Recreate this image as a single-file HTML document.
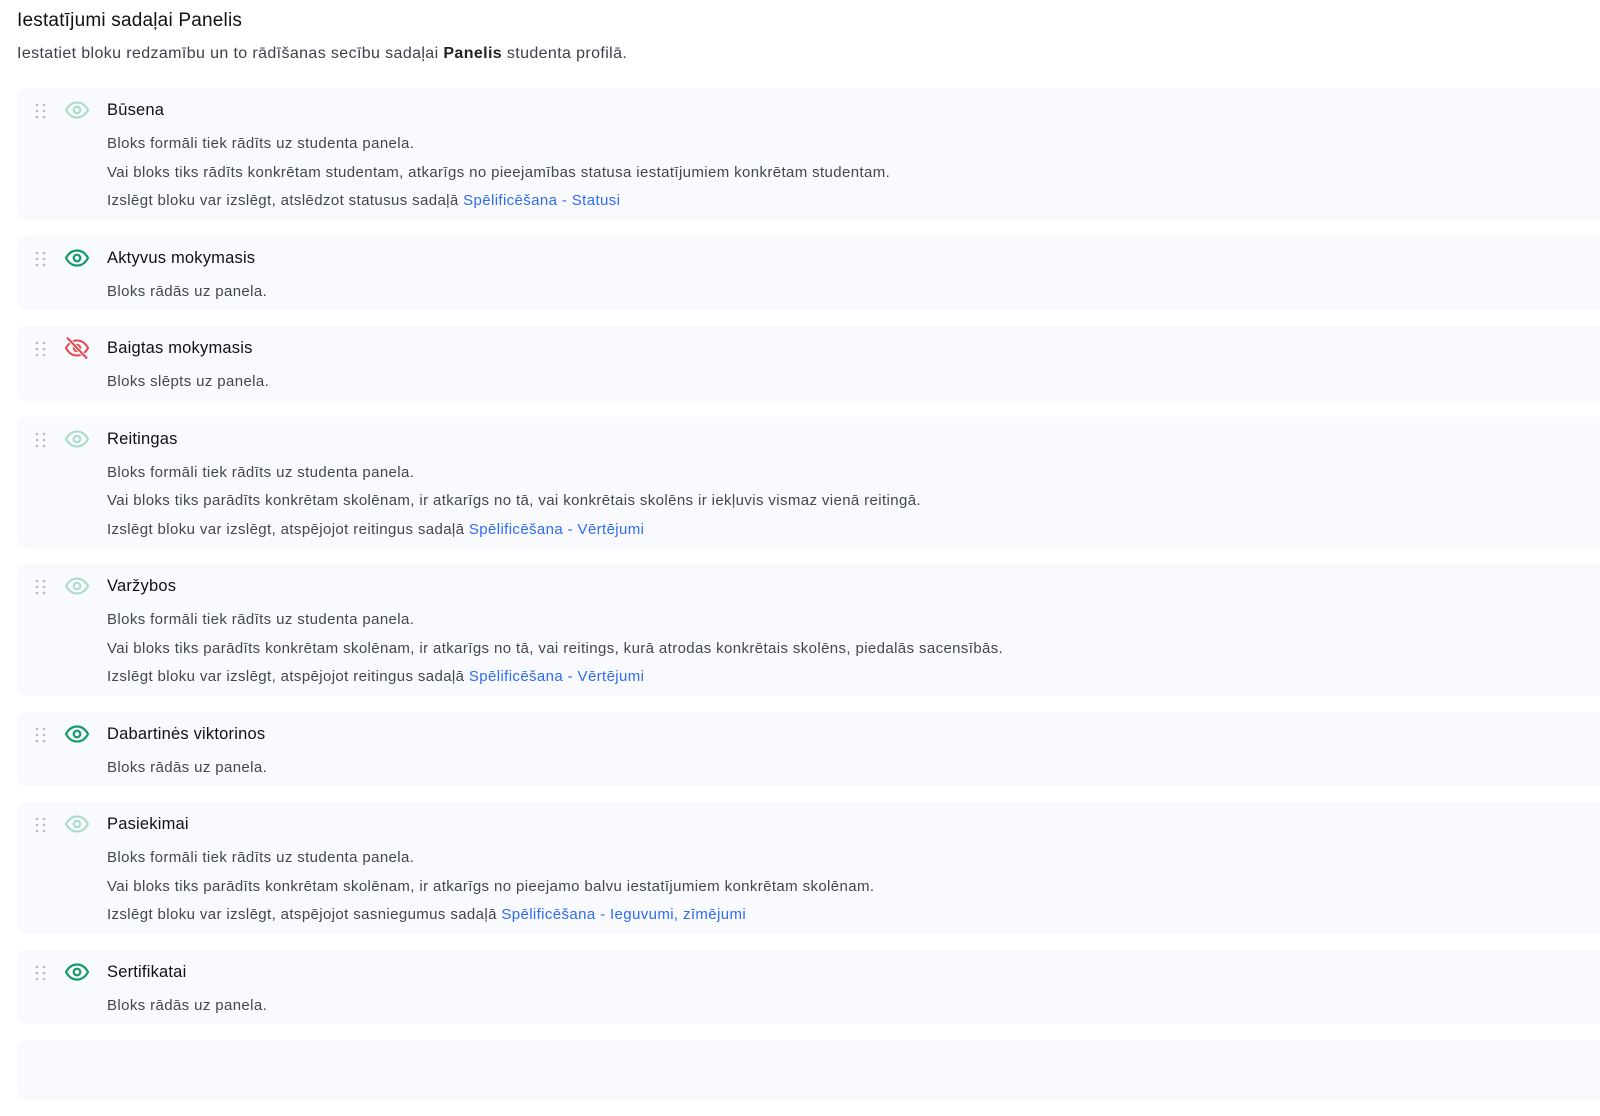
<!DOCTYPE html>
<html><head><meta charset="utf-8"><style>
*{box-sizing:border-box;margin:0;padding:0}
body{width:1600px;height:1052px;overflow:hidden;background:#fff;font-family:"Liberation Sans",sans-serif;color:#1f2328}
h1{position:absolute;left:17px;top:9px;font-size:19px;font-weight:400;line-height:24px;color:#111;letter-spacing:0.2px}
.sub{position:absolute;left:17px;top:43px;font-size:16px;line-height:22px;color:#3c4048;letter-spacing:0.38px}
.sub b{font-weight:700;color:#222}
.list{position:absolute;left:17px;top:88px;width:1600px}
.card{background:#f9fafd;border-radius:8px;padding:8px 0 4px 90px;margin-bottom:16px;position:relative}
.t{font-size:16.5px;line-height:28px;color:#111;letter-spacing:0.2px}
.d{margin-top:6px;font-size:15px;line-height:28.5px;color:#42464e;letter-spacing:0.38px}
.d a{color:#2f6bf2;text-decoration:none}
.h{position:absolute;left:18px;top:15px}
.e{position:absolute;left:47px;top:13px}
</style></head><body>
<h1>Iestatījumi sadaļai Panelis</h1>
<div class="sub">Iestatiet bloku redzamību un to rādīšanas secību sadaļai <b>Panelis</b> studenta profilā.</div>
<svg width="0" height="0" style="position:absolute">
<defs>
<g id="hd" fill="#b7bcc6"><circle cx="2" cy="2" r="1.3"/><circle cx="9" cy="2" r="1.3"/><circle cx="2" cy="8" r="1.3"/><circle cx="9" cy="8" r="1.3"/><circle cx="2" cy="14" r="1.3"/><circle cx="9" cy="14" r="1.3"/></g>
</defs>
</svg>
<div class="list">
<div class="card"><svg class="h" width="12" height="16"><use href="#hd"/></svg><svg class="e" width="26" height="18" viewBox="0 0 26 18" fill="none" stroke="#a6dcc6" stroke-width="2"><path d="M2 9C5 3.5 9 1.5 13 1.5S21 3.5 24 9C21 14.5 17 16.5 13 16.5S5 14.5 2 9Z"/><circle cx="13" cy="9" r="3.3"/></svg>
<div class="t">Būsena</div><div class="d">Bloks formāli tiek rādīts uz studenta panela.<br>Vai bloks tiks rādīts konkrētam studentam, atkarīgs no pieejamības statusa iestatījumiem konkrētam studentam.<br>Izslēgt bloku var izslēgt, atslēdzot statusus sadaļā <a>Spēlificēšana - Statusi</a></div></div>
<div class="card"><svg class="h" width="12" height="16"><use href="#hd"/></svg><svg class="e" width="26" height="18" viewBox="0 0 26 18" fill="none" stroke="#139a68" stroke-width="2.2"><path d="M2 9C5 3.5 9 1.5 13 1.5S21 3.5 24 9C21 14.5 17 16.5 13 16.5S5 14.5 2 9Z"/><circle cx="13" cy="9" r="3.3"/></svg>
<div class="t">Aktyvus mokymasis</div><div class="d">Bloks rādās uz panela.</div></div>
<div class="card"><svg class="h" width="12" height="16"><use href="#hd"/></svg><svg class="e" width="26" height="24" viewBox="0 0 26 24" fill="none" stroke="#e5484d" stroke-width="2" style="top:10px"><path d="M2 12C5 6.5 9 4.5 13 4.5S21 6.5 24 12C21 17.5 17 19.5 13 19.5S5 17.5 2 12Z"/><circle cx="13" cy="12" r="3.3"/><path d="M3 1.5L23 22.5" stroke="#f9fafd" stroke-width="4"/><path d="M3 1.5L23 22.5"/></svg>
<div class="t">Baigtas mokymasis</div><div class="d">Bloks slēpts uz panela.</div></div>
<div class="card"><svg class="h" width="12" height="16"><use href="#hd"/></svg><svg class="e" width="26" height="18" viewBox="0 0 26 18" fill="none" stroke="#a6dcc6" stroke-width="2"><path d="M2 9C5 3.5 9 1.5 13 1.5S21 3.5 24 9C21 14.5 17 16.5 13 16.5S5 14.5 2 9Z"/><circle cx="13" cy="9" r="3.3"/></svg>
<div class="t">Reitingas</div><div class="d">Bloks formāli tiek rādīts uz studenta panela.<br>Vai bloks tiks parādīts konkrētam skolēnam, ir atkarīgs no tā, vai konkrētais skolēns ir iekļuvis vismaz vienā reitingā.<br>Izslēgt bloku var izslēgt, atspējojot reitingus sadaļā <a>Spēlificēšana - Vērtējumi</a></div></div>
<div class="card"><svg class="h" width="12" height="16"><use href="#hd"/></svg><svg class="e" width="26" height="18" viewBox="0 0 26 18" fill="none" stroke="#a6dcc6" stroke-width="2"><path d="M2 9C5 3.5 9 1.5 13 1.5S21 3.5 24 9C21 14.5 17 16.5 13 16.5S5 14.5 2 9Z"/><circle cx="13" cy="9" r="3.3"/></svg>
<div class="t">Varžybos</div><div class="d">Bloks formāli tiek rādīts uz studenta panela.<br>Vai bloks tiks parādīts konkrētam skolēnam, ir atkarīgs no tā, vai reitings, kurā atrodas konkrētais skolēns, piedalās sacensībās.<br>Izslēgt bloku var izslēgt, atspējojot reitingus sadaļā <a>Spēlificēšana - Vērtējumi</a></div></div>
<div class="card"><svg class="h" width="12" height="16"><use href="#hd"/></svg><svg class="e" width="26" height="18" viewBox="0 0 26 18" fill="none" stroke="#139a68" stroke-width="2.2"><path d="M2 9C5 3.5 9 1.5 13 1.5S21 3.5 24 9C21 14.5 17 16.5 13 16.5S5 14.5 2 9Z"/><circle cx="13" cy="9" r="3.3"/></svg>
<div class="t">Dabartinės viktorinos</div><div class="d">Bloks rādās uz panela.</div></div>
<div class="card"><svg class="h" width="12" height="16"><use href="#hd"/></svg><svg class="e" width="26" height="18" viewBox="0 0 26 18" fill="none" stroke="#a6dcc6" stroke-width="2"><path d="M2 9C5 3.5 9 1.5 13 1.5S21 3.5 24 9C21 14.5 17 16.5 13 16.5S5 14.5 2 9Z"/><circle cx="13" cy="9" r="3.3"/></svg>
<div class="t">Pasiekimai</div><div class="d">Bloks formāli tiek rādīts uz studenta panela.<br>Vai bloks tiks parādīts konkrētam skolēnam, ir atkarīgs no pieejamo balvu iestatījumiem konkrētam skolēnam.<br>Izslēgt bloku var izslēgt, atspējojot sasniegumus sadaļā <a>Spēlificēšana - Ieguvumi, zīmējumi</a></div></div>
<div class="card"><svg class="h" width="12" height="16"><use href="#hd"/></svg><svg class="e" width="26" height="18" viewBox="0 0 26 18" fill="none" stroke="#139a68" stroke-width="2.2"><path d="M2 9C5 3.5 9 1.5 13 1.5S21 3.5 24 9C21 14.5 17 16.5 13 16.5S5 14.5 2 9Z"/><circle cx="13" cy="9" r="3.3"/></svg>
<div class="t">Sertifikatai</div><div class="d">Bloks rādās uz panela.</div></div>
<div class="card" style="height:60px"></div>
</div>
</body></html>
